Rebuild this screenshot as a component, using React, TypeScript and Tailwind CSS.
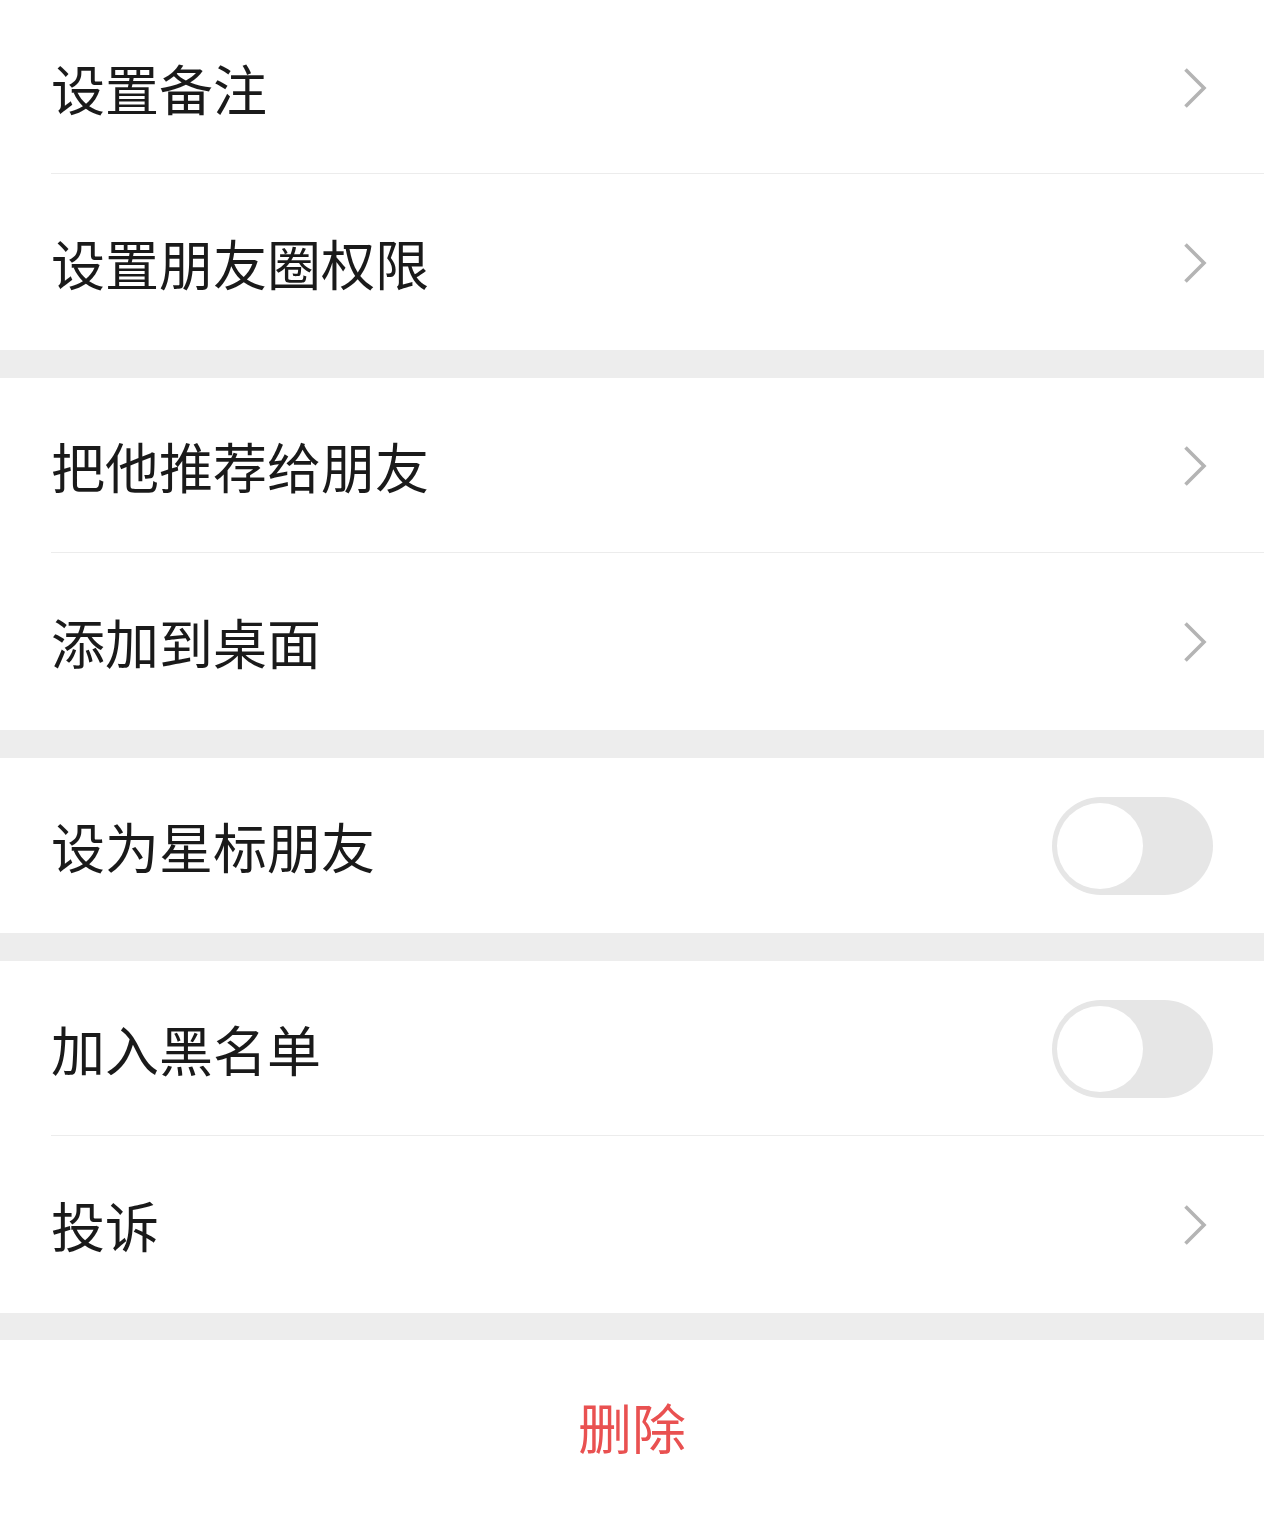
import React from "react";

type Row = { label: string; kind: "link" | "toggle" };

const groups: { tall: boolean; rows: Row[] }[] = [
  {
    tall: false,
    rows: [
      { label: "设置备注", kind: "link" },
      { label: "设置朋友圈权限", kind: "link" },
    ],
  },
  {
    tall: true,
    rows: [
      { label: "把他推荐给朋友", kind: "link" },
      { label: "添加到桌面", kind: "link" },
    ],
  },
  { tall: false, rows: [{ label: "设为星标朋友", kind: "toggle" }] },
  {
    tall: true,
    rows: [
      { label: "加入黑名单", kind: "toggle" },
      { label: "投诉", kind: "link" },
    ],
  },
];

function Chevron() {
  return (
    <svg width="24" height="42" viewBox="0 0 24 42" fill="none" className="mr-[57px]">
      <polyline
        points="2.5,2.5 21,21 2.5,39.5"
        stroke="#b4b4b4"
        strokeWidth="3.6"
        strokeLinecap="butt"
        strokeLinejoin="miter"
      />
    </svg>
  );
}

function Toggle() {
  return (
    <div className="mr-[51px] flex h-[98px] w-[161px] items-center rounded-full bg-[#e6e6e6] pl-[5px]">
      <div className="h-[86px] w-[86px] rounded-full bg-white" />
    </div>
  );
}

function SettingRow({ row, last, tall }: { row: Row; last: boolean; tall: boolean }) {
  return (
    <div
      className={
        "relative flex items-center justify-between bg-white " + (tall ? "h-[176px]" : "h-[175px]")
      }
    >
      <span className="pl-[51px] text-[54px] leading-none text-[#1a1a1a]">{row.label}</span>
      {row.kind === "link" ? <Chevron /> : <Toggle />}
      {!last && <div className="absolute bottom-[1px] left-[51px] right-0 h-px bg-[#ececec]" />}
    </div>
  );
}

export default function App() {
  return (
    <div
      className="min-h-[1514px] w-full bg-white"
      style={{ fontFamily: '"Noto Sans CJK SC", "Noto Sans", sans-serif' }}
    >
      {groups.map((group, gi) => (
        <div key={gi}>
          {group.rows.map((row, ri) => (
            <SettingRow
              key={row.label}
              row={row}
              tall={group.tall}
              last={ri === group.rows.length - 1}
            />
          ))}
          <div className={gi === groups.length - 1 ? "h-[27px] bg-[#ededed]" : "h-[28px] bg-[#ededed]"} />
        </div>
      ))}
      <div className="flex h-[174px] items-center justify-center bg-white">
        <span className="text-[54px] leading-none text-[#e95151]">删除</span>
      </div>
    </div>
  );
}
